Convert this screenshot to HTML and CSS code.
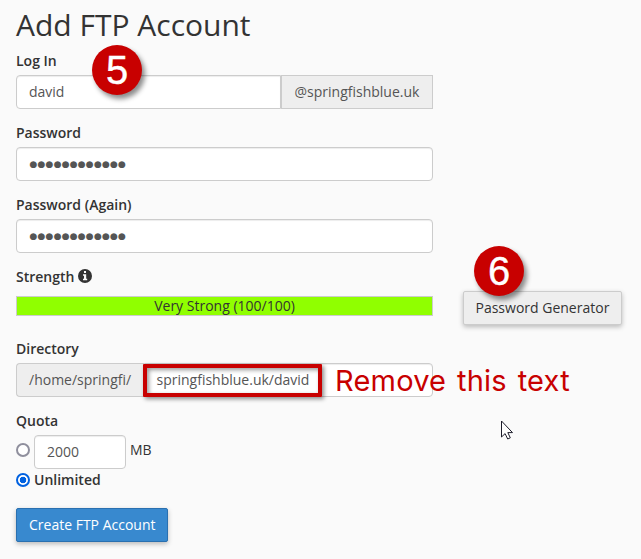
FILE: index.html
```html
<!DOCTYPE html>
<html lang="en">
<head>
<meta charset="utf-8">
<title>Add FTP Account</title>
<link rel="stylesheet" href="styles.css">
</head>
<body>
<main class="page">
  <h2 class="title">Add FTP Account</h2>
  <form class="form">
    <div class="group">
      <div class="label">Log In</div>
      <div class="control">
        <div class="field joined-left">david</div>
        <div class="addon addon-right">@springfishblue.uk</div>
      </div>
      <span class="badge badge-login">5</span>
    </div>
    <div class="group">
      <div class="label">Password</div>
      <div class="control"><div class="field dots">●●●●●●●●●●●●</div></div>
    </div>
    <div class="group">
      <div class="label">Password (Again)</div>
      <div class="control"><div class="field dots">●●●●●●●●●●●●</div></div>
    </div>
    <div class="group strength">
      <div class="label">Strength
        <svg class="info" viewBox="0 0 14 14"><circle cx="7" cy="7" r="7" fill="#333"/><path fill="#fafafa" d="M6 2h2v2H6zM5 5.2h3.2v4.5h1v1.6H5V9.7h1V6.8H5z"/></svg>
      </div>
      <div class="row">
        <div class="meter">Very Strong (100/100)</div>
        <div class="generator">
          <div class="button">Password Generator</div>
          <span class="badge badge-generator">6</span>
        </div>
      </div>
    </div>
    <div class="group">
      <div class="label">Directory</div>
      <div class="control">
        <div class="addon addon-left">/home/springfi/</div>
        <div class="field joined-right">springfishblue.uk/david</div>
      </div>
      <span class="highlight"></span>
      <span class="note">Remove this text</span>
    </div>
    <div class="quota">
      <div class="label">Quota</div>
      <div class="option">
        <span class="radio raised"></span>
        <div class="field amount">2000</div>
        <span class="unit">MB</span>
      </div>
      <div class="option">
        <span class="radio checked"></span>
        <span class="unlimited">Unlimited</span>
      </div>
    </div>
    <div class="button primary">Create FTP Account</div>
  </form>
  <svg class="cursor" viewBox="0 0 13 20"><path d="M.5 1v16l3.6-3.4L6.7 19l2.6-1.2-2.5-5.2h4.7z" fill="#fff" stroke="#1c1c2b" stroke-width="1"/></svg>
</main>
</body>
</html>
```
FILE: styles.css
```css
* { box-sizing: border-box; }
body {
  margin: 0;
  background: #fafafa;
  color: #333;
  font: 14px/20px "Open Sans", sans-serif;
}
.page {
  position: relative;
  height: 559px;
  padding: 8px 16px 0;
  overflow: hidden;
}
.title {
  margin: 0 0 10px;
  font-size: 30px;
  font-weight: 400;
  line-height: 33px;
}
.group { position: relative; width: 417px; margin-bottom: 14px; }
.label { height: 20px; margin-bottom: 4px; font-weight: 600; }
.control { display: flex; }
.field, .addon {
  height: 34px;
  padding: 6px 12px;
  border: 1px solid #ccc;
  border-radius: 4px;
  color: #555;
  white-space: nowrap;
}
.field {
  flex: 1;
  background: #fff;
  box-shadow: inset 0 1px 1px rgba(0, 0, 0, .075);
}
.addon { background: #eee; }
.joined-left { border-radius: 4px 0 0 4px; }
.joined-right { border-radius: 0 4px 4px 0; padding-left: 12px; }
.addon-right { width: 152.5px; padding-left: 13px; border-radius: 0; }
.addon-left { width: 127.5px; border-radius: 4px 0 0 4px; border-right: 0; }
.dots { padding-left: 12.5px; font: 9px/20px "DejaVu Sans", sans-serif; letter-spacing: .2px; }
.strength { margin-bottom: 23px; }
.info { width: 14px; height: 14px; vertical-align: -1px; }
.row { display: flex; width: 606px; height: 20px; margin-top: 9px; }
.strength .label { margin-bottom: 0; }
.meter {
  width: 417px;
  height: 20px;
  border: 1px solid #ccc;
  background: #90ff00;
  line-height: 18px;
  text-align: center;
}
.generator { position: relative; margin: -5px 0 0 30px; }
.button {
  width: 159px;
  height: 34px;
  padding: 6px 11.5px;
  border: 1px solid #ccc;
  border-radius: 2px;
  background: #eee;
  box-shadow: 0 2px 5px rgba(0, 0, 0, .26);
  white-space: nowrap;
}
.primary {
  width: 152px;
  padding: 6px 12px;
  margin-top: 18px;
  border-color: #2a70b0;
  background: #3889cf;
  color: #fff;
}
.badge {
  position: absolute;
  width: 50px;
  height: 50px;
  border-radius: 50%;
  background: #c80000;
  box-shadow: 3px 4px 5px rgba(0, 0, 0, .45);
  color: #fff;
  font: 40px/50px "Liberation Sans", sans-serif;
  -webkit-text-stroke: .4px #fff;
  text-align: center;
}
.badge-login { left: 76px; top: -6px; }
.badge-generator { left: 11px; top: -45px; }
.highlight {
  position: absolute;
  left: 127px;
  top: 25px;
  width: 179px;
  height: 33px;
  border: 4px solid #c80000;
  border-radius: 1px;
  box-shadow: 2px 2px 4px rgba(0, 0, 0, .45), inset 2px 2px 4px rgba(0, 0, 0, .4);
}
.note {
  position: absolute;
  left: 319px;
  top: 24px;
  color: #c80000;
  font: 29px/36px Inter, sans-serif;
  letter-spacing: .2px;
  word-spacing: 2.5px;
  white-space: nowrap;
}
.option { display: flex; align-items: center; }
.radio {
  width: 14px;
  height: 14px;
  margin-right: 4px;
  border: 2px solid #8f8f9d;
  border-radius: 50%;
  background: #fff;
}
.raised { margin-bottom: 4px; }
.checked {
  border-color: #0061e0;
  background: radial-gradient(circle, #0061e0 3px, #fff 3.6px);
}
.amount { flex: none; width: 92px; }
.unit { margin: -4px 0 0 4px; }
.unlimited { font-weight: 600; }
.quota .option + .option { margin-top: 1px; }
.cursor { position: absolute; left: 501px; top: 420px; width: 13px; height: 20px; }
```
